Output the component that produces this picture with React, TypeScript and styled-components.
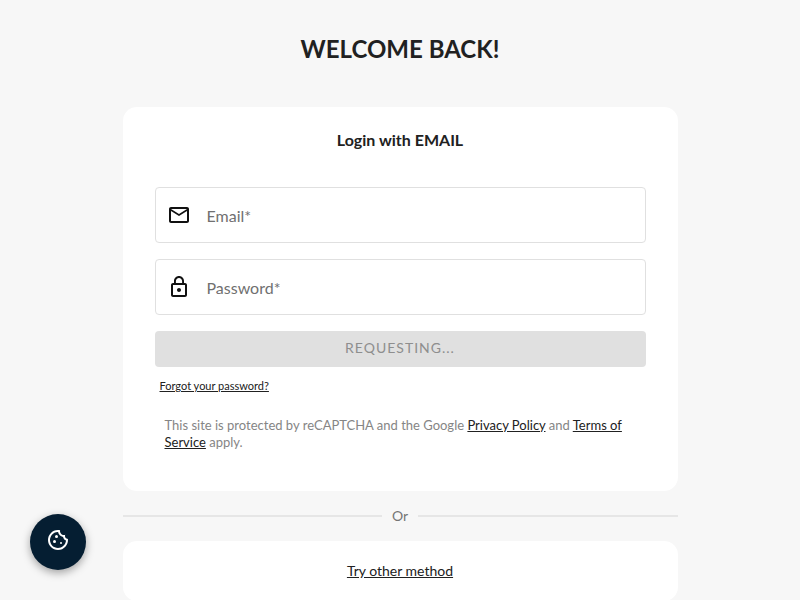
import React from "react";
import styled, { createGlobalStyle } from "styled-components";
import { MdLockOutline, MdOutlineCookie, MdOutlineEmail } from "react-icons/md";

const GlobalStyle = createGlobalStyle`
  *, *::before, *::after { box-sizing: border-box; }
  body {
    margin: 0;
    background: #f7f7f7;
    color: #212121;
    font-family: Lato, "Liberation Sans", sans-serif;
  }
`;

const Page = styled.main`
  max-width: 555px;
  margin: 0 auto;
  padding-top: 33px;
`;

const Title = styled.h1`
  margin: 0 0 42px;
  font-size: 24px;
  line-height: 32px;
  font-weight: 700;
  text-align: center;
`;

const Card = styled.section`
  padding: 23px 32px 40px;
  border-radius: 14px;
  background: #fff;
`;

const CardTitle = styled.h2`
  margin: 0 0 37px;
  font-size: 16px;
  line-height: 20px;
  font-weight: 700;
  text-align: center;
`;

const Form = styled.form`
  display: flex;
  flex-direction: column;
  gap: 16px;
`;

const Field = styled.label`
  display: flex;
  align-items: center;
  gap: 16px;
  height: 56px;
  padding: 0 11px;
  border: 1px solid #e0e0e0;
  border-radius: 4px;
  color: #111;

  svg {
    flex: none;
  }
`;

const Input = styled.input`
  flex: 1;
  min-width: 0;
  padding: 2px 0 0;
  border: 0;
  outline: 0;
  background: transparent;
  color: #212121;
  font: inherit;
  font-size: 16px;
  line-height: 24px;

  &::placeholder {
    color: #707070;
    opacity: 1;
  }
`;

const SubmitButton = styled.button`
  height: 36px;
  padding: 0 16px 2px;
  border: 0;
  border-radius: 4px;
  background: #e0e0e0;
  color: #8e8e8e;
  font: inherit;
  font-size: 14px;
  line-height: 24px;
  letter-spacing: 1px;
  text-transform: uppercase;
`;

const TextLink = styled.a`
  color: #212121;
  text-decoration: underline;
`;

const ForgotRow = styled.p`
  margin: 10px 5px 0;
  font-size: 11px;
  line-height: 18px;
`;

const Notice = styled.p`
  margin: 22px 10px 0;
  color: #858585;
  font-size: 13px;
  line-height: 17px;
`;

const Divider = styled.div`
  display: flex;
  align-items: center;
  gap: 10px;
  height: 50px;
  color: #757575;
  font-size: 14px;
  line-height: 16px;

  &::before,
  &::after {
    content: "";
    flex: 1;
    height: 2px;
    background: #e6e6e6;
  }
`;

const MethodCard = styled.section`
  padding: 20px 32px;
  border-radius: 14px;
  background: #fff;
  font-size: 14px;
  line-height: 20px;
  text-align: center;
`;

const CookieButton = styled.button`
  position: fixed;
  left: 30px;
  bottom: 30px;
  display: flex;
  align-items: center;
  justify-content: center;
  width: 56px;
  height: 56px;
  padding: 0 0 4px;
  border: 0;
  border-radius: 50%;
  background: #051e32;
  color: #fff;
  box-shadow: 0 3px 8px rgba(0, 0, 0, 0.35);
`;

export default function App() {
  return (
    <>
      <GlobalStyle />
      <Page>
        <Title>WELCOME BACK!</Title>
        <Card>
          <CardTitle>Login with EMAIL</CardTitle>
          <Form onSubmit={(event) => event.preventDefault()}>
            <Field>
              <MdOutlineEmail size={24} aria-hidden />
              <Input type="email" placeholder="Email*" aria-label="Email" required />
            </Field>
            <Field>
              <MdLockOutline size={24} aria-hidden />
              <Input type="password" placeholder="Password*" aria-label="Password" required />
            </Field>
            <SubmitButton type="submit" disabled>Requesting...</SubmitButton>
          </Form>
          <ForgotRow>
            <TextLink href="#forgot">Forgot your password?</TextLink>
          </ForgotRow>
          <Notice>
            This site is protected by reCAPTCHA and the Google{" "}
            <TextLink href="#privacy">Privacy Policy</TextLink> and{" "}
            <TextLink href="#terms">Terms of Service</TextLink> apply.
          </Notice>
        </Card>
        <Divider>Or</Divider>
        <MethodCard>
          <TextLink href="#methods">Try other method</TextLink>
        </MethodCard>
      </Page>
      <CookieButton type="button" aria-label="Cookie settings">
        <MdOutlineCookie size={24} aria-hidden />
      </CookieButton>
    </>
  );
}
